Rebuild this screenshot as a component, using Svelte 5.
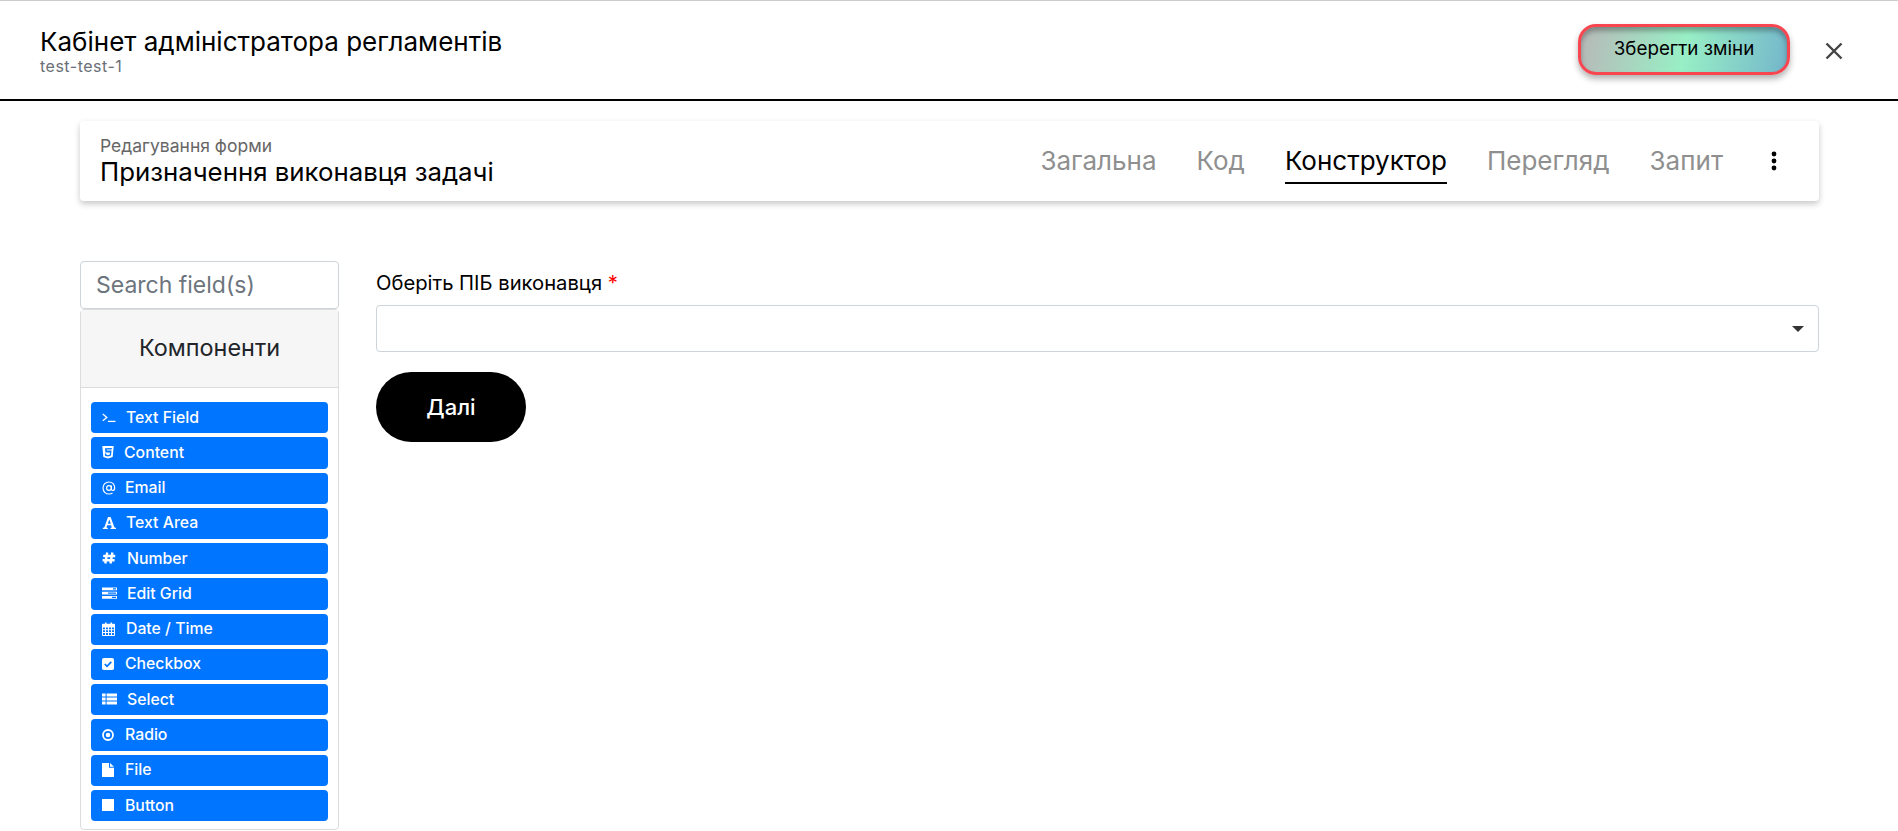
<script>
  const tabs = [
    { label: 'Загальна' },
    { label: 'Код' },
    { label: 'Конструктор', active: true },
    { label: 'Перегляд' },
    { label: 'Запит' }
  ];
  const items = [
    { label: 'Text Field', icon: 'terminal', w: 24 },
    { label: 'Content', icon: 'html5', w: 22 },
    { label: 'Email', icon: 'at', w: 23 },
    { label: 'Text Area', icon: 'font', w: 24 },
    { label: 'Number', icon: 'hash', w: 25 },
    { label: 'Edit Grid', icon: 'tasks', w: 25 },
    { label: 'Date / Time', icon: 'calendar', w: 24 },
    { label: 'Checkbox', icon: 'check', w: 23 },
    { label: 'Select', icon: 'list', w: 25 },
    { label: 'Radio', icon: 'dot', w: 23 },
    { label: 'File', icon: 'file', w: 23 },
    { label: 'Button', icon: 'stop', w: 23 }
  ];
</script>

<div class="page">
  <header class="top">
    <div>
      <div class="title">Кабінет адміністратора регламентів</div>
      <div class="sub">test-test-1</div>
    </div>
    <div class="actions">
      <button class="save">Зберегти зміни</button>
      <svg class="close" viewBox="0 0 18 18" width="18" height="18" aria-label="close">
        <path d="M1.500 1.500 16.500 16.500M16.500 1.500 1.500 16.500" stroke="#444" stroke-width="2.400" fill="none" />
      </svg>
    </div>
  </header>

  <main class="wrap">
    <section class="card">
      <div class="card-text">
        <div class="card-sub">Редагування форми</div>
        <div class="card-title">Призначення виконавця задачі</div>
      </div>
      <nav class="tabs">
        {#each tabs as t}
          <span class="tab" class:active={t.active}>{t.label}</span>
        {/each}
        <svg class="more" viewBox="0 0 6 20" width="6" height="20">
          <circle cx="3" cy="3" r="2.400" /><circle cx="3" cy="10" r="2.400" /><circle cx="3" cy="17" r="2.400" />
        </svg>
      </nav>
    </section>

    <div class="builder">
      <aside class="side">
        <div class="search">Search field(s)</div>
        <div class="panel">
          <div class="panel-head">Компоненти</div>
          <div class="list">
            {#each items as it}
              <div class="item">
                <span class="ico" style="width:{it.w}px">
                  {#if it.icon === 'terminal'}
                    <svg viewBox="0 0 14 14" width="14" height="14"><path d="M.8 4 4.800 7.400.8 10.800" fill="none" stroke="#fff" stroke-width="1.300"/><path d="M6 11.400h7.500" stroke="#fff" stroke-width="1.300"/></svg>
                  {:else if it.icon === 'html5'}
                    <svg viewBox="0 0 12 14" width="12" height="14"><path fill="#fff" fill-rule="evenodd" d="M.3 1h11.400l-1 11L6 13.400 1.300 12zM3 3.300l.4 4.300h4.600l-.2 2-1.800.6-1.800-.6-.1-1.100H2.800l.2 2.300L6 11.500l3-1 .5-5H4.800l-.1-1h5l.1-1.400z"/></svg>
                  {:else if it.icon === 'at'}
                    <svg viewBox="0 0 14 14" width="14" height="14"><g fill="none" stroke="#fff" stroke-width="1.200"><circle cx="7" cy="7" r="2.400"/><path d="M9.400 4.500V8q0 1.500 1.300 1.500 2-.1 2-2.800C12.700 3.300 10.300 1 7 1 3.600 1 1 3.500 1 7s2.600 6 6 6q2 0 3.500-1"/></g></svg>
                  {:else if it.icon === 'font'}
                    <svg viewBox="0 0 15 14" width="15" height="14"><path fill="#fff" fill-rule="evenodd" d="M6 1h2.600l3.800 10.300 1.600.6v1.100H8.500v-1.100l1.300-.4-.7-2.200H5.100l-.7 2.200 1.400.4v1.100H.8v-1.100l1.600-.6zM7.300 3.600 5.800 7.800h3z"/></svg>
                  {:else if it.icon === 'hash'}
                    <svg viewBox="0 0 14 14" width="14" height="14"><path d="M5.200 1.500 3.300 12.500M10.400 1.500 8.500 12.500M1.200 5h12M.6 9.200h12" stroke="#fff" stroke-width="2.400" fill="none"/></svg>
                  {:else if it.icon === 'tasks'}
                    <svg viewBox="0 0 15 14" width="15" height="14"><path fill="#fff" fill-rule="evenodd" d="M0 1.500h15v2.800H0zM11 2.300v1.200h3V2.300zM0 5.700h15v2.800H0zM6 6.500v1.200h8V6.500zM0 9.900h15v2.800H0zM10 10.700v1.200h4v-1.200z"/></svg>
                  {:else if it.icon === 'calendar'}
                    <svg viewBox="0 0 13 14" width="13" height="14"><path fill="#fff" fill-rule="evenodd" d="M1 1.800h2V.6h1.500v1.200h4V.6H10v1.200h2q1 0 1 1V13q0 1-1 1H1q-1 0-1-1V2.800q0-1 1-1zM1 5.500v1.800h2V5.500zm3 0v1.800h2V5.500zm3 0v1.800h2V5.500zm3 0v1.800h2V5.500zM1 8.300v1.800h2V8.300zm3 0v1.800h2V8.300zm3 0v1.800h2V8.300zm3 0v1.800h2V8.300zM1 11.100V13h2v-1.900zm3 0V13h2v-1.900zm3 0V13h2v-1.900zm3 0V13h2v-1.900z"/></svg>
                  {:else if it.icon === 'check'}
                    <svg viewBox="0 0 12 12" width="12" height="12"><rect width="12" height="12" rx="1.800" fill="#fff"/><path d="M2.800 6 5 8.300 9.300 3.800" fill="none" stroke="#0075ff" stroke-width="1.800"/></svg>
                  {:else if it.icon === 'list'}
                    <svg viewBox="0 0 15 12" width="15" height="12"><path fill="#fff" d="M0 .6h3.600v3H0zM4.600.6H15v3H4.600zM0 4.600h3.600v3H0zM4.600 4.600H15v3H4.600zM0 8.600h3.600v3H0zM4.600 8.600H15v3H4.600z"/></svg>
                  {:else if it.icon === 'dot'}
                    <svg viewBox="0 0 12 12" width="12" height="12"><circle cx="6" cy="6" r="5" fill="none" stroke="#fff" stroke-width="1.800"/><circle cx="6" cy="6" r="2.300" fill="#fff"/></svg>
                  {:else if it.icon === 'file'}
                    <svg viewBox="0 0 12 14" width="12" height="14"><path fill="#fff" d="M0 0h7v4.800h5V14H0zM8 0l4 3.800H8z"/></svg>
                  {:else}
                    <svg viewBox="0 0 12 12" width="12" height="12"><rect width="12" height="12" fill="#fff"/></svg>
                  {/if}
                </span>
                <span>{it.label}</span>
              </div>
            {/each}
          </div>
        </div>
      </aside>

      <div class="form">
        <div class="label">Оберіть ПІБ виконавця <span class="req">*</span></div>
        <div class="select"><span class="caret"></span></div>
        <button class="next">Далі</button>
      </div>
    </div>
  </main>
</div>

<style>
  :global(body) {
    margin: 0;
    overflow: hidden;
    background: #fff;
  }
  .page {
    height: 831px;
    overflow: hidden;
    font-family: Inter, "Liberation Sans", sans-serif;
    color: #000;
  }
  .top {
    box-sizing: border-box;
    height: 101px;
    border-top: 1px solid #ccc;
    border-bottom: 2px solid #000;
    padding: 0 40px;
    display: flex;
    align-items: center;
    justify-content: space-between;
  }
  .title {
    font-size: 26px;
    line-height: 32px;
    font-weight: 400;
    color: #000;
  }
  .sub {
    font-size: 16px;
    line-height: 16px;
    letter-spacing: 0.5px;
    color: #6a6f76;
  }
  .actions {
    display: flex;
    align-items: center;
    gap: 35px;
    padding-right: 15px;
    margin-top: 2px;
  }
  .save {
    box-sizing: border-box;
    width: 212px;
    height: 51px;
    margin-top: -4px;
    padding-bottom: 1px;
    border: 3px solid #f74650;
    border-radius: 18px;
    background: linear-gradient(100deg, #b8b8b8 0%, #98efc5 50%, #74b6cb 100%);
    box-shadow: 0 4px 6px rgba(0, 0, 0, 0.3), inset 0 4px 5px rgba(0, 0, 0, 0.3);
    font: 400 18.800px/20px Inter, "Liberation Sans", sans-serif;
    color: #000;
  }
  .close {
    display: block;
  }
  .wrap {
    padding: 20px 79px 0 80px;
  }
  .card {
    box-sizing: border-box;
    height: 80px;
    border-radius: 4px;
    background: #fff;
    box-shadow: 0 3px 6px rgba(0, 0, 0, 0.22);
    padding: 0 42px 0 20px;
    display: flex;
    align-items: center;
    justify-content: space-between;
  }
  .card-text {
    padding-top: 2px;
  }
  .card-sub {
    font-size: 17.500px;
    line-height: 20px;
    color: #666;
  }
  .card-title {
    font-size: 25.800px;
    line-height: 32px;
  }
  .tabs {
    display: flex;
    align-items: center;
    gap: 40px;
  }
  .tab {
    font-size: 26px;
    line-height: 30px;
    padding: 6px 0;
    border-bottom: 2px solid transparent;
    border-top: 2px solid transparent;
    color: #8f8f8f;
  }
  .tab.active {
    color: #000;
    border-bottom-color: #000;
  }
  .more {
    display: block;
    margin-left: 8px;
  }
  .builder {
    display: flex;
    gap: 37px;
    padding-top: 60px;
  }
  .side {
    flex: 0 0 259px;
    width: 259px;
  }
  .search {
    box-sizing: border-box;
    height: 48px;
    border: 1px solid #ced4da;
    border-radius: 4px;
    padding: 0 15px;
    font: 400 23px/46px Inter, sans-serif;
    color: #6c757d;
  }
  .panel {
    box-sizing: border-box;
    border: 1px solid #dcdcdc;
    border-radius: 4px;
    height: 521px;
  }
  .panel-head {
    height: 77px;
    background: #f6f6f6;
    border-bottom: 1px solid #dcdcdc;
    text-align: center;
    font-size: 23.400px;
    line-height: 76px;
    color: #212529;
  }
  .list {
    padding: 14px 10px;
    display: flex;
    flex-direction: column;
    gap: 4px;
  }
  .item {
    box-sizing: border-box;
    height: 31.270px;
    padding-bottom: 1px;
    background: #0075ff;
    border-radius: 4px;
    padding-left: 11px;
    display: flex;
    align-items: center;
    color: #fff;
    font-size: 15.800px;
    font-weight: 500;
  }
  .ico {
    display: flex;
    align-items: center;
    flex: none;
  }
  .ico svg {
    display: block;
  }
  .form {
    flex: 1;
    padding-top: 10px;
  }
  .label {
    font-size: 20.200px;
    line-height: 24px;
    margin-bottom: 9.800px;
  }
  .req {
    color: #f00;
  }
  .select {
    box-sizing: border-box;
    height: 47px;
    border: 1px solid #ced4da;
    border-radius: 4px;
    position: relative;
  }
  .caret {
    position: absolute;
    right: 14px;
    top: 20px;
    border-left: 6px solid transparent;
    border-right: 6px solid transparent;
    border-top: 6px solid #333;
  }
  .next {
    display: block;
    margin-top: 20px;
    width: 150px;
    height: 70px;
    border: 0;
    border-radius: 35px;
    background: #000;
    color: #fff;
    font: 500 22px/26px Inter, "Liberation Sans", sans-serif;
  }
</style>
